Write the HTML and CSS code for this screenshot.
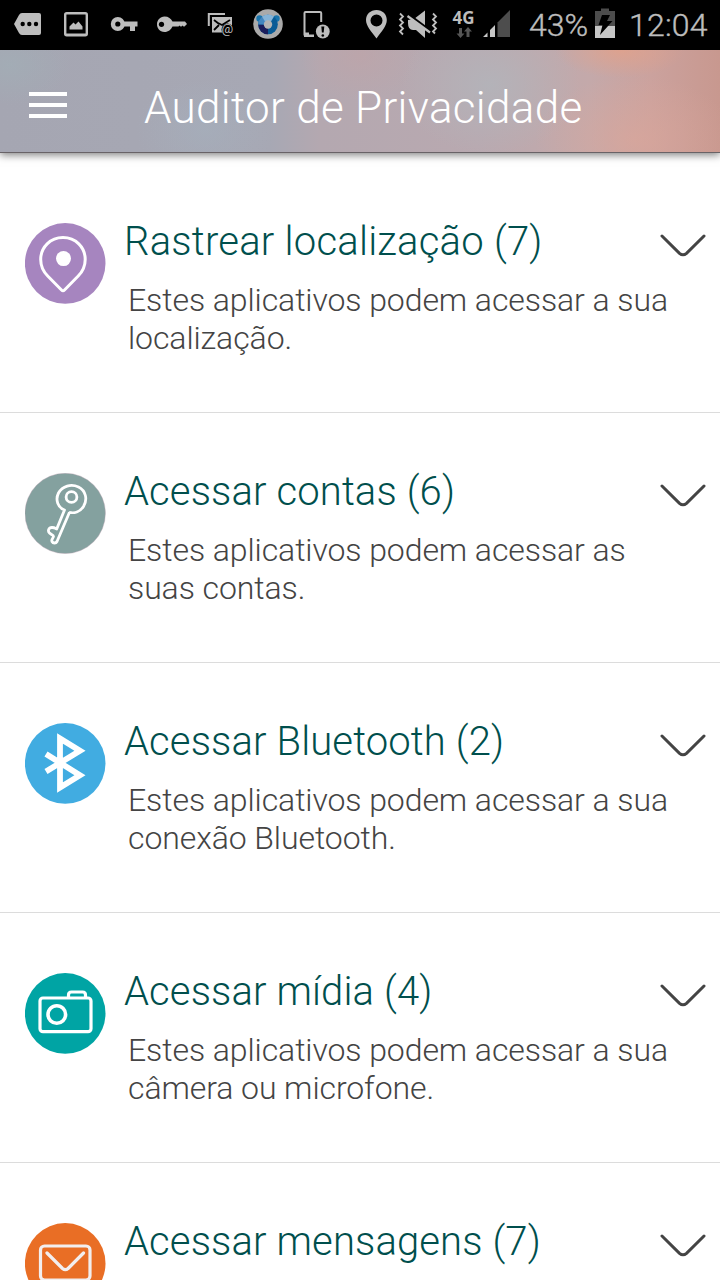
FILE: index.html
```html
<!DOCTYPE html>
<html lang="pt-BR">
<head>
<meta charset="utf-8">
<title>Auditor de Privacidade</title>
<link rel="stylesheet" href="styles.css">
</head>
<body>
<div class="screen">
  <div class="status">
    <svg width="58" height="50" viewBox="0 0 58 50" fill="#bdbdbd"><path d="M14 24l5-9q1-2 3-2h17q2 0 2 2v18q0 2-2 2H22q-2 0-3-2z"/><g fill="#000"><circle cx="22.7" cy="24" r="2.2"/><circle cx="29.3" cy="24" r="2.2"/><circle cx="36" cy="24" r="2.2"/></g></svg>
    <svg width="42" height="50" viewBox="58 0 42 50"><rect x="65.2" y="13.2" width="21.6" height="22" rx="1.5" fill="none" stroke="#bdbdbd" stroke-width="2.4"/><path d="M69.5 29.5v-3l4-4 2 2 3-3 4 5v3z" fill="#bdbdbd"/><path d="M65 33.5h22v2H65z" fill="#bdbdbd"/></svg>
    <svg width="48" height="50" viewBox="100 0 48 50"><circle cx="117.8" cy="24" r="4.8" fill="none" stroke="#bdbdbd" stroke-width="4.4"/><path d="M124 21.5h13.5v5H135V31h-5v-4.500h-6z" fill="#bdbdbd"/></svg>
    <svg width="52" height="50" viewBox="148 0 52 50"><path fill="#bdbdbd" d="M164.500 16.500c4 0 6.500 2 8 5h12.500l2 2.500-2.500 2.500h-1l-1-1-1 1h-1l-1-1-1 1h-6c-1.500 3-4 5.500-8 5.500-5 0-7.500-4-7.500-7.700 0-4 3-7.800 7.500-7.800z"/><circle cx="161.500" cy="24.300" r="2.600" fill="#000"/></svg>
    <svg width="48" height="50" viewBox="200 0 48 50"><path d="M208.800 26V14H225" fill="none" stroke="#bdbdbd" stroke-width="2"/><path d="M212 17h20v15.500h-20z" fill="#bdbdbd"/><path d="M214 20l4.500 3.500M230 20l-8 5-4-2M214 30l5-5" fill="none" stroke="#000" stroke-width="1.800"/><circle cx="227.500" cy="29.500" r="6" fill="#000"/><text x="221.500" y="33" class="at">@</text></svg>
    <svg width="46" height="50" viewBox="248 0 46 50"><circle cx="268" cy="24" r="14.800" fill="#aaa"/><circle cx="259.500" cy="18.500" r="3.200" fill="#1975ad"/><circle cx="276.500" cy="18.500" r="3.200" fill="#1975ad"/><circle cx="268" cy="24.500" r="9.800" fill="#095b96"/><path d="M258.200 24.500A9.800 9.800 0 0 0 268 34.300V24.500z" fill="#1b1d5b"/><path d="M258.200 24.500A9.800 9.800 0 0 1 268 14.700V24.500z" fill="#4387c0"/><path d="M262 16.500a9.800 9.800 0 0 1 12 0l-3 5h-6z" fill="#85b4d8"/><circle cx="268" cy="24.500" r="4.200" fill="#b5b5b5"/></svg>
    <svg width="66" height="50" viewBox="294 0 66 50"><path d="M304.500 35.500V13q0-1 1-1H320q1.200 0 1.200 1v9M304.500 36H314" fill="none" stroke="#bdbdbd" stroke-width="2"/><path d="M304 32.500h5v2h5V37h-10z" fill="#bdbdbd"/><circle cx="322.800" cy="31.500" r="6.900" fill="#bdbdbd"/><path d="M321.300 26.500h3l-.6 6h-1.800z" fill="#000"/><circle cx="322.800" cy="35.500" r="1.300" fill="#000"/></svg>
    <svg width="34" height="50" viewBox="360 0 34 50"><path fill="#bdbdbd" fill-rule="evenodd" d="M376.500 10c6 0 10.300 4.300 10.300 10 0 6-5 11-10.300 18.500C371 31 366 26 366 20c0-5.700 4.500-10 10.500-10zm0 4.500a6 6 0 1 0 0 12 6 6 0 0 0 0-12z"/></svg>
    <svg width="52" height="50" viewBox="394 0 52 50"><path d="M408 20l6-1 11-8.500V38l-9-8h-3q-5 0-5-7z" fill="#bdbdbd"/><path d="M406 12.500l26 19.500" stroke="#000" stroke-width="2.500"/><path d="M407.500 16l22.500 16.500" stroke="#bdbdbd" stroke-width="2.200"/><path d="M400 13.500l3 3-3 3 3 3-3 3 3 3-3 3 3 3M433 13.500l3 3-3 3 3 3-3 3 3 3-3 3 2 2" fill="none" stroke="#bdbdbd" stroke-width="1.800"/></svg>
    <svg width="34" height="50" viewBox="446 0 34 50"><text x="452.500" y="23.500" class="network" textLength="22" lengthAdjust="spacingAndGlyphs">4G</text><path d="M459 28h3v5.500h2.500l-4 4.500-4-4.500h2.500zM466.500 37v-5.500H464l4-4.500 4 4.500h-2.500V37z" fill="#555"/></svg>
    <svg width="36" height="50" viewBox="480 0 36 50"><path d="M497.500 37V22.500L510 10v27z" fill="#4d4d4d"/><path d="M483 37l4.500-4.500V37zM490 37v-7l5-5v12z" fill="#c7c7c7"/></svg>
    <span class="percent">43%</span>
    <svg width="34" height="50" viewBox="588 0 34 50"><path d="M595 11h6V8.500h8V11h6v15h-20z" fill="#4d4d4d"/><path d="M595 26h20v12h-20z" fill="#c7c7c7"/><path d="M602 15h8l-3 6h5.500L600 35l2.500-10H598.500z" fill="#000"/></svg>
    <span class="clock">12:04</span>
  </div>
  <header class="header">
    <div class="menu"><i></i><i></i><i></i></div>
    <h1>Auditor de Privacidade</h1>
  </header>
  <main class="list">
    <section class="row">
      <svg class="icon" viewBox="25 223 81 81"><circle cx="65.200" cy="263.400" r="40.300" fill="#a685bf"/><path d="M63 237.500c12.500 0 22.200 9.500 22.200 22 0 7-2.500 12-7 16.500L64.500 290q-1.500 1.500-3 0L47.700 276c-4.500-4.500-7-9.500-7-16.500 0-12.500 9.800-22 22.300-22z" fill="none" stroke="#fff" stroke-width="3"/><circle cx="63.500" cy="258.600" r="7.500" fill="#fff"/></svg>
      <div class="copy"><h2>Rastrear localização (7)</h2><p>Estes aplicativos podem acessar a sua<br>localização.</p></div>
      <svg class="chevron" viewBox="0 0 46 26"><path d="M2 2L19.500 19.300Q23 22.300 26.500 19.300L44 2"/></svg>
    </section>
    <section class="row">
      <svg class="icon" viewBox="25 473 81 81"><circle cx="65.200" cy="513.400" r="40.200" fill="#84a19f" stroke="#b5a0ae" stroke-width=".4"/><g fill="none" stroke="#fff" stroke-width="2.800" stroke-linejoin="round"><path d="M69 512.300C74 513.500 80 512 83.500 506.500C88 499 85.500 490.500 78.500 487C71 483.500 62.500 486 58.500 493C55 500 58 507.500 64.500 510L56.700 529C55 528.500 55.500 527.500 52 527.500C48.500 527.500 47.500 531 49.500 533C51 534.500 53.500 535 53.500 536.500C53 538.500 51 539.500 52 541.500C53 543.500 56 543.500 57 541.500L69.500 512.300"/><circle cx="71.500" cy="497" r="5.400"/></g></svg>
      <div class="copy"><h2>Acessar contas (6)</h2><p>Estes aplicativos podem acessar as<br>suas contas.</p></div>
      <svg class="chevron" viewBox="0 0 46 26"><path d="M2 2L19.500 19.300Q23 22.300 26.500 19.300L44 2"/></svg>
    </section>
    <section class="row">
      <svg class="icon" viewBox="25 723 81 81"><circle cx="65.200" cy="763.400" r="40.300" fill="#41ace1"/><path d="M46 754l34 21.300-20 12.200V738.500L80 750.700 46 771.500" fill="none" stroke="#fff" stroke-width="5.800"/></svg>
      <div class="copy"><h2>Acessar Bluetooth (2)</h2><p>Estes aplicativos podem acessar a sua<br>conexão Bluetooth.</p></div>
      <svg class="chevron" viewBox="0 0 46 26"><path d="M2 2L19.500 19.300Q23 22.300 26.500 19.300L44 2"/></svg>
    </section>
    <section class="row">
      <svg class="icon" viewBox="25 973 81 81"><circle cx="65.200" cy="1013.400" r="40.300" fill="#00a4a4"/><g fill="none" stroke="#fff" stroke-width="3.200"><rect x="40" y="998" width="51" height="33.700" rx="3"/><circle cx="56.800" cy="1014.500" r="8.800" stroke-width="3.600"/><path d="M68.500 998v-3q0-3 3-3h11q3 0 3 3v3"/></g></svg>
      <div class="copy"><h2>Acessar mídia (4)</h2><p>Estes aplicativos podem acessar a sua<br>câmera ou microfone.</p></div>
      <svg class="chevron" viewBox="0 0 46 26"><path d="M2 2L19.500 19.300Q23 22.300 26.500 19.300L44 2"/></svg>
    </section>
    <section class="row">
      <svg class="icon" viewBox="25 1223 81 81"><circle cx="65.200" cy="1263.400" r="40.300" fill="#e96e25"/><g fill="none" stroke="#f2eeee" stroke-width="3.200" stroke-linecap="round"><rect x="40.500" y="1246" width="49.500" height="34" rx="4"/><path d="M47 1253l15.500 15.500q2.800 2.300 5.600 0L83.500 1253"/></g></svg>
      <div class="copy"><h2>Acessar mensagens (7)</h2></div>
      <svg class="chevron" viewBox="0 0 46 26"><path d="M2 2L19.500 19.300Q23 22.300 26.500 19.300L44 2"/></svg>
    </section>
  </main>
</div>
</body>
</html>
```
FILE: styles.css
```css
* { box-sizing: border-box; }
body { margin: 0; background: #fff; font-family: Roboto, sans-serif; }
.screen { width: 720px; height: 1280px; overflow: hidden; display: flex; flex-direction: column; }
.status { height: 50px; flex: none; display: flex; background: #000; color: #bdbdbd; font-size: 32px; line-height: 50px; white-space: nowrap; }
.status svg { flex: none; display: block; }
.at { font: 400 13px Roboto, sans-serif; fill: #bdbdbd; }
.network { font: 700 18px "Noto Sans", sans-serif; fill: #bdbdbd; }
.percent, .clock { font-weight: 300; -webkit-text-stroke: .4px #bdbdbd; }
.percent { width: 72px; padding-left: 13px; }
.clock { padding-left: 7px; letter-spacing: .2px; }
.header {
  height: 103px; flex: none; display: flex; align-items: center;
  padding-left: 29px; gap: 77px;
  border-bottom: 1px solid #696367;
  box-shadow: 0 2px 8px rgba(0, 0, 0, .5);
  background:
    radial-gradient(ellipse 65px 28px at 620px 0, #e8a084aa, #e8a08400),
    radial-gradient(ellipse 100px 65px at 635px 90px, #dda79a99, #dda79a00),
    radial-gradient(ellipse 90px 70px at 490px 35px, #b2b5bbcc, #b2b5bb00),
    radial-gradient(ellipse 70px 50px at 205px 80px, #a5b0bd99, #a5b0bd00),
    radial-gradient(ellipse 60px 40px at 10px 15px, #a1b0b799, #a1b0b700),
    radial-gradient(ellipse 60px 45px at 360px 5px, #c0a3a799, #c0a3a700),
    linear-gradient(90deg, #a5a6b2 0, #a7a8b4 270px, #b4a8b0 320px, #b9a9b0 480px, #c4a9aa 590px, #cba29e 650px, #c8988f 720px);
}
.menu { width: 38px; height: 26px; display: grid; gap: 7px; margin-top: 8px; }
.menu i { background: #fff; height: 4px; }
h1, h2, p { margin: 0; font-weight: 300; white-space: nowrap; }
h1 { font-size: 44px; line-height: 52px; color: #fff; padding-top: 13px; letter-spacing: .31px; }
.list { padding-top: 10px; }
.row { height: 250px; display: flex; padding: 55px 14px 0 25px; border-bottom: 1px solid #dcdcdc; }
.row:first-child h2 { letter-spacing: .23px; }
.icon { width: 81px; height: 81px; margin-top: 5px; flex: none; }
.copy { padding-left: 18px; flex: 1; min-width: 0; }
h2 { font-size: 40px; line-height: 48px; color: #004f4d; letter-spacing: .12px; }
p { font-size: 32px; line-height: 38px; color: #444; padding: 15px 0 0 4px; letter-spacing: -.09px; }
.chevron { width: 46px; height: 26px; flex: none; margin-top: 15.5px; fill: none; stroke: #444; stroke-width: 3; stroke-linecap: round; }
```
